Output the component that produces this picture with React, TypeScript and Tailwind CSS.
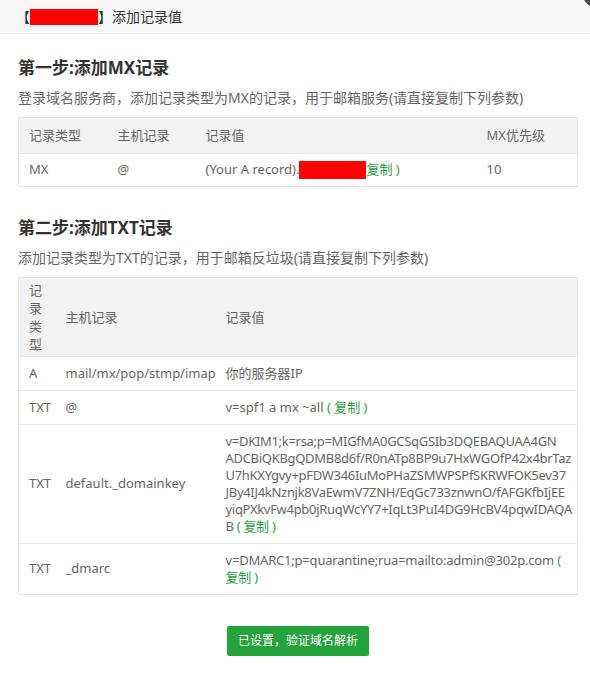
import React from "react";

const font = { fontFamily: '"Noto Sans", "Noto Sans CJK SC", sans-serif' };

function Copy({ open = true }: { open?: boolean }) {
  return (
    <span className="text-[#2f9e44]">
      {open ? "( " : ""}复制 )
    </span>
  );
}

export default function App() {
  const dkim = [
    "v=DKIM1;k=rsa;p=MIGfMA0GCSqGSIb3DQEBAQUAA4GN",
    "ADCBiQKBgQDMB8d6f/R0nATp8BP9u7HxWGOfP42x4brTaz",
    "U7hKXYgvy+pFDW346IuMoPHaZSMWPSPfSKRWFOK5ev37",
    "JBy4IJ4kNznjk8VaEwmV7ZNH/EqGc733znwnO/fAFGKfbIjEE",
    "yiqPXkvFw4pb0jRuqWcYY7+IqLt3PuI4DG9HcBV4pqwIDAQA",
  ];
  return (
    <div
      className="relative w-[590px] h-[687px] overflow-hidden bg-white text-[#333]"
      style={font}
    >
      <div className="absolute left-[582px] top-[-24px] w-[32px] h-[32px] rounded-full bg-[#4d4d4d]" />
      <div className="h-[34px] bg-[#f8f8f8] border-b border-[#eeeeee] flex items-center pl-[16px] text-[14px] text-[#333]">
        <span>【</span>
        <span className="inline-block w-[68px] h-[16px] bg-[#ff0000]" />
        <span>】</span>
        <span>添加记录值</span>
      </div>

      <div className="pl-[18px] pr-[12px]">
        <h2 className="mt-[22px] text-[17px] leading-[24px] font-bold text-[#333]">第一步:添加MX记录</h2>
        <p className="mt-[8px] text-[14px] leading-[20px] text-[#666]">
          登录域名服务商，添加记录类型为MX的记录，用于邮箱服务(请直接复制下列参数)
        </p>
        <table className="mt-[9px] w-full table-fixed border border-[#e6e6e6] border-collapse text-[13px] text-[#666]">
          <colgroup>
            <col className="w-[89px]" />
            <col className="w-[88px]" />
            <col className="w-[281px]" />
            <col />
          </colgroup>
          <thead>
            <tr className="bg-[#f2f2f2] border-b border-[#e6e6e6]">
              <th className="text-left font-normal px-[10px] py-[9px] leading-[17px]">记录类型</th>
              <th className="text-left font-normal px-[10px] py-[9px] leading-[17px]">主机记录</th>
              <th className="text-left font-normal px-[10px] py-[9px] leading-[17px]">记录值</th>
              <th className="text-left font-normal px-[10px] py-[9px] leading-[17px]">MX优先级</th>
            </tr>
          </thead>
          <tbody>
            <tr>
              <td className="px-[10px] py-[7px] leading-[17px]">MX</td>
              <td className="px-[10px] py-[7px] leading-[17px]">@</td>
              <td className="px-[10px] py-[7px] leading-[17px] whitespace-nowrap">
                (Your A record).
                <span className="inline-block align-middle w-[67px] h-[18px] bg-[#ff0000] -mt-[2px]" />
                <Copy open={false} />
              </td>
              <td className="px-[10px] py-[7px] leading-[17px]">10</td>
            </tr>
          </tbody>
        </table>

        <h2 className="mt-[29px] text-[17px] leading-[24px] font-bold text-[#333]">第二步:添加TXT记录</h2>
        <p className="mt-[8px] text-[14px] leading-[20px] text-[#666]">
          添加记录类型为TXT的记录，用于邮箱反垃圾(请直接复制下列参数)
        </p>
        <table className="mt-[9px] w-full table-fixed border border-[#e6e6e6] border-collapse text-[13px] text-[#666]">
          <colgroup>
            <col className="w-[38px]" />
            <col className="w-[160px]" />
            <col />
          </colgroup>
          <thead>
            <tr className="bg-[#f2f2f2] border-b border-[#e6e6e6]">
              <th className="text-left font-normal pl-[10px] pr-[2px] py-[3px] break-all">
                <div className="leading-[18px]">
                  <div>记</div>
                  <div>录</div>
                  <div>类</div>
                  <div>型</div>
                </div>
              </th>
              <th className="text-left font-normal px-[9px] py-[3px] leading-[18px]">主机记录</th>
              <th className="text-left font-normal px-[9px] py-[3px] leading-[18px]">记录值</th>
            </tr>
          </thead>
          <tbody>
            <tr className="border-b border-[#e6e6e6]">
              <td className="pl-[10px] pr-0 py-[8px] leading-[17px]">A</td>
              <td className="px-[9px] py-[8px] leading-[17px] whitespace-nowrap">mail/mx/pop/stmp/imap</td>
              <td className="px-[9px] py-[8px] leading-[17px]">你的服务器IP</td>
            </tr>
            <tr className="border-b border-[#e6e6e6]">
              <td className="pl-[10px] pr-0 py-[8px] leading-[17px]">TXT</td>
              <td className="px-[9px] py-[8px] leading-[17px]">@</td>
              <td className="px-[9px] py-[8px] leading-[17px]">
                v=spf1 a mx ~all <Copy />
              </td>
            </tr>
            <tr className="border-b border-[#e6e6e6]">
              <td className="pl-[10px] pr-0 py-[8px] leading-[17px]">TXT</td>
              <td className="px-[9px] py-[8px] leading-[17px]">default._domainkey</td>
              <td className="px-[9px] py-[8px] leading-[17px] whitespace-nowrap tracking-[-0.3px]">
                {dkim.map((l) => (
                  <React.Fragment key={l}>
                    {l}
                    <br />
                  </React.Fragment>
                ))}
                B <Copy />
              </td>
            </tr>
            <tr>
              <td className="pl-[10px] pr-0 py-[8px] leading-[17px]">TXT</td>
              <td className="px-[9px] py-[8px] leading-[17px]">_dmarc</td>
              <td className="px-[9px] py-[8px] leading-[17px] whitespace-nowrap tracking-[-0.2px]">
                v=DMARC1;p=quarantine;rua=mailto:admin@302p.com <span className="text-[#2f9e44]">(</span>
                <br />
                <span className="text-[#2f9e44]">复制 )</span>
              </td>
            </tr>
          </tbody>
        </table>

        <div className="mt-[31px] flex justify-center">
          <button className="h-[30px] w-[142px] rounded-[2px] bg-[#24a23c] text-white text-[12px]" style={font}>
            已设置，验证域名解析
          </button>
        </div>
      </div>
    </div>
  );
}
